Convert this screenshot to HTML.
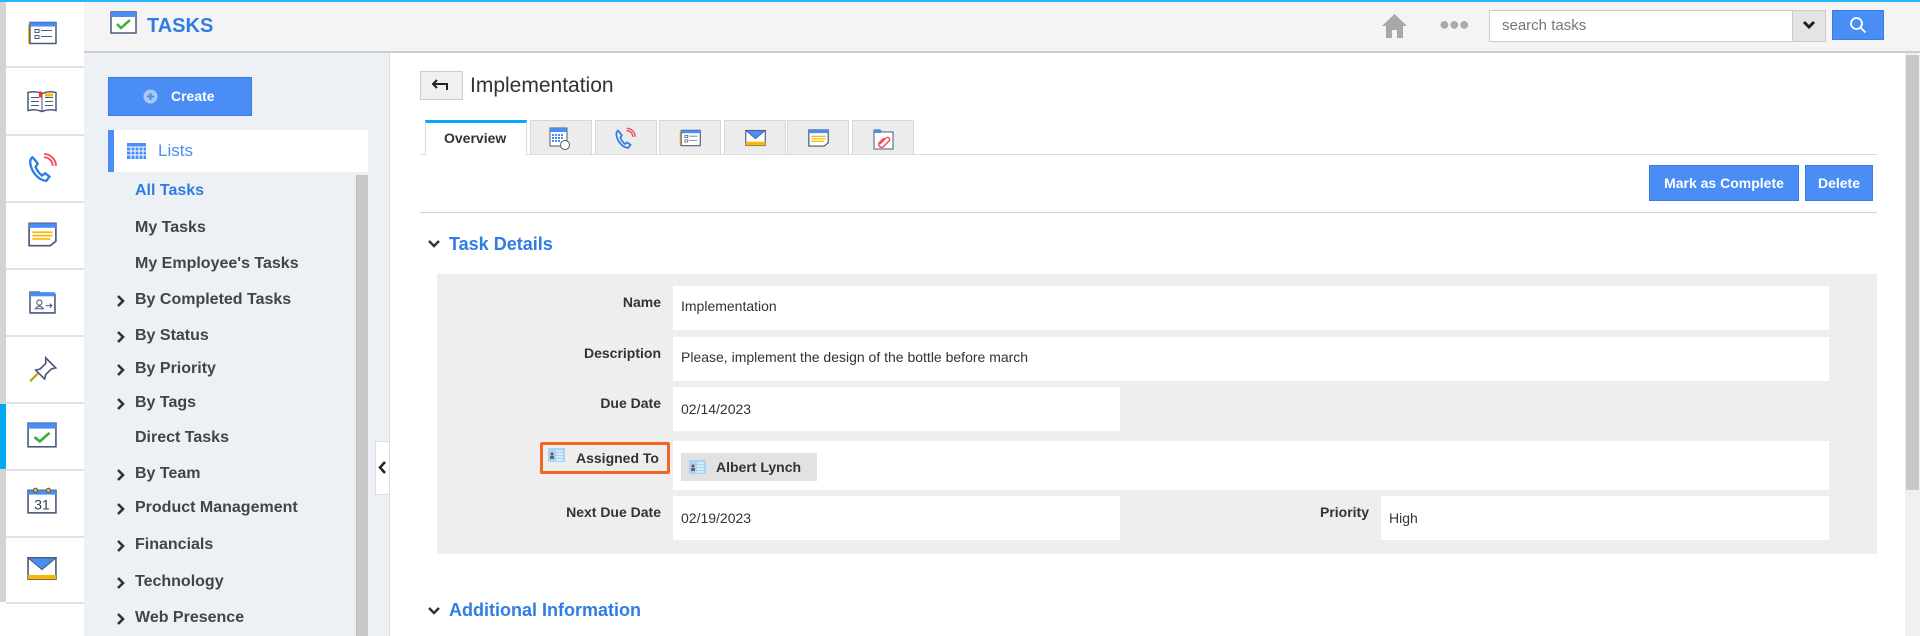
<!DOCTYPE html>
<html><head><meta charset="utf-8"><style>
*{box-sizing:border-box;margin:0;padding:0}
body{width:1920px;height:636px;overflow:hidden;background:#fff;font-family:"Liberation Sans",Arial,sans-serif;position:relative}
.a{position:absolute}
.strip{left:0;top:0;width:84px;height:636px;background:#fff}
.strip .edge{left:0;top:0;width:6px;height:602px;background:#d4d4d4}
.sep{left:6px;width:78px;height:2px;background:#e2e2e2}
.nav{left:84px;top:53px;width:305px;height:583px;background:#edf0f5}
.li{position:absolute;left:135px;font-size:16px;font-weight:bold;color:#444}
.chev{position:absolute;left:116px;width:10px;height:14px}
.lbl{position:absolute;font-size:14px;font-weight:bold;color:#333;text-align:right}
.fld{position:absolute;background:#fff;font-size:14px;color:#333;padding-left:8px}
.tab{position:absolute;top:120px;height:34px;background:#ececec;border:1px solid #d8d8d8;border-bottom:none}
.btn{position:absolute;background:#4a8ef5;color:#fff;font-size:14px;font-weight:bold;text-align:center;border:1px solid #3b7de0}
</style></head><body>
<svg width="0" height="0" style="position:absolute"><defs><symbol id="ch" viewBox="0 0 10 14"><path d="M2 2l5 5-5 5" stroke="#333" stroke-width="2.6" fill="none"/></symbol></defs></svg>
<div class="a" style="left:0;top:0;width:1920px;height:2px;background:#29b6f6;z-index:5"></div>
<!-- header -->
<div class="a" style="left:84px;top:0;width:1836px;height:53px;background:#f4f4f4;border-bottom:2px solid #ccc"></div>
<svg class="a" style="left:110px;top:11px" width="27" height="23" viewBox="0 0 27 23"><rect x="1" y="1" width="25" height="21" fill="#fff" stroke="#4a5a7a" stroke-width="1.5"/><rect x="1" y="1" width="25" height="5" fill="#4a8ef5"/><path d="M7 13l4 4 9-8" stroke="#3cad3c" stroke-width="2.5" fill="none"/></svg>
<div class="a" style="left:147px;top:15px;font-size:20px;font-weight:bold;color:#2f7de1">TASKS</div>
<svg class="a" style="left:1381px;top:13px" width="27" height="26" viewBox="0 0 27 26"><path d="M13.5 1L1 13h4v12h6v-8h5v8h6V13h4z" fill="#a8a8a8"/></svg>
<div class="a" style="left:1439px;top:14px;font-size:18px;color:#aaa;letter-spacing:-1px">●●●</div>
<div class="a" style="left:1489px;top:10px;width:337px;height:32px;background:#fff;border:1px solid #ccc"></div>
<div class="a" style="left:1502px;top:17px;font-size:15px;color:#777">search tasks</div>
<div class="a" style="left:1792px;top:11px;width:33px;height:30px;background:#e4e4e4;border-left:1px solid #ccc"></div>
<svg class="a" style="left:1802px;top:20px" width="14" height="10" viewBox="0 0 14 10"><path d="M2 2l5 5 5-5" stroke="#222" stroke-width="3" fill="none"/></svg>
<div class="a" style="left:1832px;top:10px;width:52px;height:30px;background:#4a8ef5;border:1px solid #3b7de0"></div>
<svg class="a" style="left:1849px;top:16px" width="18" height="18" viewBox="0 0 18 18"><circle cx="7.5" cy="7.5" r="5.5" stroke="#fff" stroke-width="1.8" fill="none"/><path d="M11.5 11.5l5 5" stroke="#fff" stroke-width="1.8"/></svg>
<!-- icon strip -->
<div class="a strip"><div class="a edge"></div>
<div class="a sep" style="top:66px"></div><div class="a sep" style="top:134px"></div><div class="a sep" style="top:201px"></div><div class="a sep" style="top:268px"></div><div class="a sep" style="top:335px"></div><div class="a sep" style="top:402px"></div><div class="a sep" style="top:469px"></div><div class="a sep" style="top:536px"></div><div class="a sep" style="top:602px"></div>
<div class="a" style="left:0;top:404px;width:6px;height:65px;background:#03a9f4"></div>
</div>
<svg class="a" style="left:27px;top:19px" width="30" height="28" viewBox="0 0 30 23"><rect x="1" y="3" width="4" height="19" fill="#f6b800"/><rect x="3" y="1" width="26" height="21" fill="#fff" stroke="#4a5a7a" stroke-width="1.5"/><rect x="3" y="1" width="26" height="4" fill="#4a8ef5"/><rect x="8" y="8" width="4" height="3" fill="none" stroke="#4a5a7a"/><rect x="8" y="14" width="4" height="3" fill="none" stroke="#4a5a7a"/><path d="M14 9h11M14 15h11" stroke="#4a5a7a"/></svg>
<svg class="a" style="left:27px;top:87px" width="30" height="27" viewBox="0 0 30 22"><path d="M1 3q7-2 14 1q7-3 14-1v18q-7-2-14 1q-7-3-14-1z" fill="#fff" stroke="#4a5a7a" stroke-width="1.5"/><path d="M15 4v18M4 8h8M4 12h8M4 16h8M18 8h8M18 12h8M18 16h8" stroke="#4a5a7a"/><rect x="18" y="4" width="8" height="3" fill="#f6b800"/><rect x="12" y="2" width="3" height="6" fill="#e33"/></svg>
<svg class="a" style="left:27px;top:152px" width="30" height="32" viewBox="0 0 28 28"><path d="M5 4q-4 3 0 12q5 9 13 10l3-4-4-3-3 2q-4-3-6-8l2-3-3-4z" fill="none" stroke="#2f7de1" stroke-width="2.2"/><path d="M16 4a8 8 0 0 1 8 8M16 1a11 11 0 0 1 11 11" stroke="#f05060" stroke-width="1.8" fill="none"/></svg>
<svg class="a" style="left:28px;top:221px" width="29" height="27" viewBox="0 0 26 22"><path d="M1 1h24v16l-5 4H1z" fill="#fff" stroke="#4a5a7a" stroke-width="1.5"/><rect x="1" y="1" width="24" height="4" fill="#4a8ef5"/><path d="M4 9h18M4 12h18M4 15h16" stroke="#f6b800" stroke-width="1.5"/></svg>
<svg class="a" style="left:29px;top:287px" width="27" height="29" viewBox="0 0 26 24"><path d="M1 3h9l2 2h13v18H1z" fill="#fff" stroke="#4a5a7a" stroke-width="1.5"/><rect x="1" y="3" width="24" height="4" fill="#4a8ef5"/><circle cx="10" cy="13" r="2.5" fill="none" stroke="#4a5a7a"/><path d="M6 19q4-5 8 0zM16 16h6M20 14l2 2-2 2" stroke="#4a5a7a" fill="none"/></svg>
<svg class="a" style="left:29px;top:354px" width="29" height="30" viewBox="0 0 26 24"><path d="M15 2l9 9-4 1-5 5-1 4-8-8 4-1 5-5z" fill="#fff" stroke="#4a5a7a" stroke-width="1.5"/><path d="M8 16L1 23" stroke="#c8a000" stroke-width="2"/></svg>
<svg class="a" style="left:27px;top:421px" width="30" height="28" viewBox="0 0 28 24"><rect x="1" y="1" width="26" height="22" fill="#fff" stroke="#4a5a7a" stroke-width="1.5"/><rect x="1" y="1" width="26" height="5" fill="#4a8ef5"/><path d="M7 14l5 4 9-8" stroke="#3cad3c" stroke-width="2.5" fill="none"/></svg>
<svg class="a" style="left:27px;top:485px" width="30" height="30" viewBox="0 0 28 26"><rect x="1" y="4" width="26" height="21" fill="#fff" stroke="#4a5a7a" stroke-width="1.5"/><rect x="1" y="4" width="26" height="4" fill="#4a8ef5"/><circle cx="8" cy="4" r="2" fill="#f6b800" stroke="#4a5a7a"/><circle cx="20" cy="4" r="2" fill="#f6b800" stroke="#4a5a7a"/><text x="14" y="22" font-size="13" text-anchor="middle" fill="#2a3a5a" font-family="Liberation Sans">31</text></svg>
<svg class="a" style="left:27px;top:556px" width="30" height="25" viewBox="0 0 28 22"><rect x="1" y="1" width="26" height="20" fill="#fff" stroke="#4a5a7a" stroke-width="1.5"/><rect x="1" y="17" width="26" height="4" fill="#f6b800"/><path d="M1 1l13 11 13-11z" fill="#4a8ef5" stroke="#4a5a7a"/></svg>
<!-- nav -->
<div class="a nav"></div>
<div class="a" style="left:108px;top:77px;width:144px;height:39px;background:#4a8ef5;border:1px solid #3b7de0"></div>
<svg class="a" style="left:143px;top:89px" width="15" height="15"><circle cx="7.5" cy="7.5" r="7" fill="#a9c8f7"/><path d="M7.5 4v7M4 7.5h7" stroke="#4a8ef5" stroke-width="2"/></svg>
<div class="a" style="left:171px;top:88px;font-size:14px;font-weight:bold;color:#fff">Create</div>
<div class="a" style="left:108px;top:130px;width:260px;height:42px;background:#fff;border-left:6px solid #4a8ef5"></div>
<svg class="a" style="left:127px;top:143px" width="19" height="16"><rect width="19" height="16" fill="#4a8ef5"/><path d="M0 4h19M0 8h19M0 12h19M4 4v12M8 4v12M12 4v12M16 4v12" stroke="#fff" stroke-width="1"/></svg>
<div class="a" style="left:158px;top:141px;font-size:17px;color:#4a8ef5">Lists</div>
<div class="a" style="left:356px;top:175px;width:12px;height:461px;background:#c8c8c8;border-left:1px solid #bbb"></div>
<div class="li" style="top:182px;color:#2f7de1">All Tasks</div>
<div class="li" style="top:219px">My Tasks</div>
<div class="li" style="top:255px">My Employee's Tasks</div>
<svg class="chev" style="top:294px"><use href="#ch"/></svg><div class="li" style="top:291px">By Completed Tasks</div>
<svg class="chev" style="top:330px"><use href="#ch"/></svg><div class="li" style="top:327px">By Status</div>
<svg class="chev" style="top:363px"><use href="#ch"/></svg><div class="li" style="top:360px">By Priority</div>
<svg class="chev" style="top:397px"><use href="#ch"/></svg><div class="li" style="top:394px">By Tags</div>
<div class="li" style="top:429px">Direct Tasks</div>
<svg class="chev" style="top:468px"><use href="#ch"/></svg><div class="li" style="top:465px">By Team</div>
<svg class="chev" style="top:502px"><use href="#ch"/></svg><div class="li" style="top:499px">Product Management</div>
<svg class="chev" style="top:539px"><use href="#ch"/></svg><div class="li" style="top:536px">Financials</div>
<svg class="chev" style="top:576px"><use href="#ch"/></svg><div class="li" style="top:573px">Technology</div>
<svg class="chev" style="top:612px"><use href="#ch"/></svg><div class="li" style="top:609px">Web Presence</div>
<div class="a" style="left:375px;top:441px;width:15px;height:54px;background:#fff;border:1px solid #ddd;border-right:none"></div>
<svg class="a" style="left:378px;top:461px" width="9" height="13"><path d="M7 1L2 6.5 7 12" stroke="#222" stroke-width="2.5" fill="none"/></svg>
<div class="a" style="left:389px;top:53px;width:1px;height:583px;background:#ddd"></div>
<!-- right scrollbar -->
<div class="a" style="left:1905px;top:53px;width:15px;height:583px;background:#f0f0f0"></div>
<div class="a" style="left:1906px;top:55px;width:13px;height:435px;background:#c8c8c8"></div>
<!-- main -->
<div class="a" style="left:420px;top:71px;width:43px;height:29px;background:#f0f0f0;border:1px solid #ccc"></div>
<svg class="a" style="left:432px;top:79px" width="18" height="12"><path d="M5 1L1 5l4 4M1 5h14v6" stroke="#222" stroke-width="2" fill="none"/></svg>
<div class="a" style="left:470px;top:74px;font-size:21px;color:#333">Implementation</div>
<div class="a" style="left:420px;top:154px;width:1457px;height:1px;background:#ddd"></div>
<div class="tab" style="left:425px;width:102px;background:#fff;border-top:3px solid #03a9f4;height:35px"></div>
<div class="a" style="left:444px;top:130px;font-size:14px;font-weight:bold;color:#333">Overview</div>
<div class="tab" style="left:530px;width:62px"></div>
<div class="tab" style="left:595px;width:62px"></div>
<div class="tab" style="left:659px;width:62px"></div>
<div class="tab" style="left:724px;width:62px"></div>
<div class="tab" style="left:787px;width:62px"></div>
<div class="tab" style="left:852px;width:62px"></div>
<svg class="a" style="left:549px;top:127px" width="21" height="23" viewBox="0 0 21 23"><rect x="1" y="1" width="17" height="18" fill="#fff" stroke="#4a5a7a"/><rect x="1" y="1" width="17" height="4" fill="#4a8ef5"/><path d="M3 8h12M3 11h12M3 14h8" stroke="#4a8ef5" stroke-dasharray="2 1" stroke-width="2"/><circle cx="16" cy="18" r="4.5" fill="#fff" stroke="#4a5a7a"/></svg>
<svg class="a" style="left:614px;top:126px" width="22" height="25" viewBox="0 0 28 28"><path d="M5 4q-4 3 0 12q5 9 13 10l3-4-4-3-3 2q-4-3-6-8l2-3-3-4z" fill="none" stroke="#2f7de1" stroke-width="2.2"/><path d="M16 4a8 8 0 0 1 8 8M16 1a11 11 0 0 1 11 11" stroke="#f05060" stroke-width="1.8" fill="none"/></svg>
<svg class="a" style="left:679px;top:127px" width="22" height="22" viewBox="0 0 30 23"><rect x="1" y="3" width="4" height="19" fill="#f6b800"/><rect x="3" y="1" width="26" height="21" fill="#fff" stroke="#4a5a7a" stroke-width="1.5"/><rect x="3" y="1" width="26" height="4" fill="#4a8ef5"/><rect x="8" y="8" width="4" height="3" fill="none" stroke="#4a5a7a"/><rect x="8" y="14" width="4" height="3" fill="none" stroke="#4a5a7a"/><path d="M14 9h11M14 15h11" stroke="#4a5a7a"/></svg>
<svg class="a" style="left:745px;top:128px" width="21" height="20" viewBox="0 0 28 22"><rect x="1" y="1" width="26" height="20" fill="#fff" stroke="#4a5a7a" stroke-width="1.5"/><rect x="1" y="16" width="26" height="5" fill="#f6b800"/><path d="M1 1l13 11 13-11z" fill="#4a8ef5" stroke="#4a5a7a"/></svg>
<svg class="a" style="left:808px;top:127px" width="21" height="22" viewBox="0 0 26 22"><path d="M1 1h24v16l-5 4H1z" fill="#fff" stroke="#4a5a7a" stroke-width="1.5"/><rect x="1" y="1" width="24" height="4" fill="#4a8ef5"/><path d="M4 9h18M4 12h18M4 15h16" stroke="#f6b800" stroke-width="1.5"/></svg>
<svg class="a" style="left:873px;top:127px" width="21" height="23" viewBox="0 0 21 23"><path d="M1 3h6l2 2h11v17H1z" fill="#fff" stroke="#4a5a7a"/><rect x="1" y="3" width="7" height="3" fill="#4a8ef5"/><path d="M7 17l6-6a2 2 0 0 1 3 3l-6 6a3 3 0 0 1-4-4l5-5" stroke="#f05060" stroke-width="1.5" fill="none"/></svg>
<div class="btn" style="left:1649px;top:165px;width:150px;height:36px;line-height:34px">Mark as Complete</div>
<div class="btn" style="left:1805px;top:165px;width:68px;height:36px;line-height:34px">Delete</div>
<div class="a" style="left:420px;top:212px;width:1457px;height:1px;background:#d4d4d4"></div>
<svg class="a" style="left:427px;top:239px" width="14" height="10"><path d="M2 2l5 5 5-5" stroke="#333" stroke-width="2.5" fill="none"/></svg>
<div class="a" style="left:449px;top:234px;font-size:18px;font-weight:bold;color:#2f7de1">Task Details</div>
<div class="a" style="left:437px;top:274px;width:1440px;height:280px;background:#eeeeee"></div>
<div class="lbl" style="left:440px;top:294px;width:221px">Name</div>
<div class="fld" style="left:673px;top:286px;width:1156px;height:44px;line-height:40px">Implementation</div>
<div class="lbl" style="left:440px;top:345px;width:221px">Description</div>
<div class="fld" style="left:673px;top:337px;width:1156px;height:44px;line-height:40px">Please, implement the design of the bottle before march</div>
<div class="lbl" style="left:440px;top:395px;width:221px">Due Date</div>
<div class="fld" style="left:673px;top:387px;width:447px;height:44px;line-height:44px">02/14/2023</div>
<div class="a" style="left:540px;top:442px;width:130px;height:32px;border:3px solid #f26522;border-radius:2px"></div>
<svg class="a" style="left:548px;top:448px" width="17" height="14"><rect width="17" height="14" fill="#a9d4f7"/><path d="M8 3h7M8 6h7M8 9h7M8 12h7" stroke="#fff"/><circle cx="4" cy="6" r="1.5" fill="#a33"/><rect x="2" y="8" width="4" height="3" fill="#666"/></svg>
<div class="lbl" style="left:576px;top:450px;text-align:left">Assigned To</div>
<div class="fld" style="left:673px;top:441px;width:1156px;height:49px"></div>
<div class="a" style="left:681px;top:453px;width:136px;height:28px;background:#e2e2e2"></div>
<svg class="a" style="left:689px;top:460px" width="17" height="14"><rect width="17" height="14" fill="#a9d4f7"/><path d="M8 3h7M8 6h7M8 9h7M8 12h7" stroke="#fff"/><circle cx="4" cy="6" r="1.5" fill="#a33"/><rect x="2" y="8" width="4" height="3" fill="#666"/></svg>
<div class="lbl" style="left:716px;top:459px;text-align:left">Albert Lynch</div>
<div class="lbl" style="left:440px;top:504px;width:221px">Next Due Date</div>
<div class="fld" style="left:673px;top:496px;width:447px;height:44px;line-height:44px">02/19/2023</div>
<div class="lbl" style="left:1200px;top:504px;width:169px">Priority</div>
<div class="fld" style="left:1381px;top:496px;width:448px;height:44px;line-height:44px">High</div>
<svg class="a" style="left:427px;top:606px" width="14" height="10"><path d="M2 2l5 5 5-5" stroke="#333" stroke-width="2.5" fill="none"/></svg>
<div class="a" style="left:449px;top:600px;font-size:18px;font-weight:bold;color:#2f7de1">Additional Information</div>
</body></html>
